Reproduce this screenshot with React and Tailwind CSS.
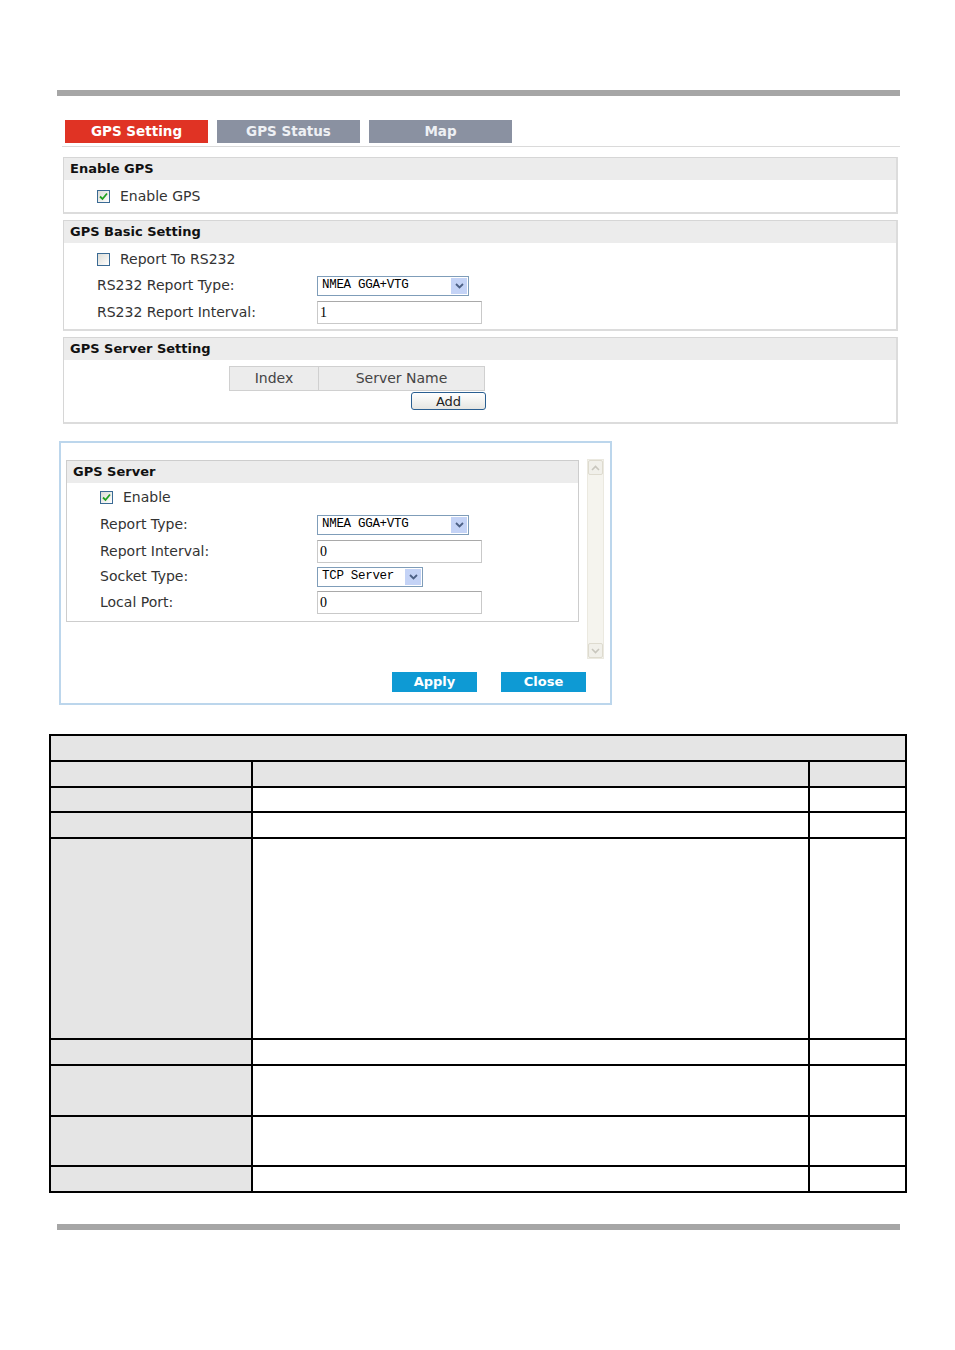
import React from 'react'

const Check = ({ on }) => (
  <span className="inline-flex h-[13px] w-[13px] items-center justify-center border border-[#3a6a94] bg-gradient-to-br from-[#dcdcd6] to-white">
    {on && (
      <svg width="9" height="9" viewBox="0 0 9 9">
        <path d="M1 4.5 L3.5 7 L8 1.5" fill="none" stroke="#21a121" strokeWidth="1.8" />
      </svg>
    )}
  </span>
)

const Select = ({ value, w = 'w-[152px]' }) => (
  <div className={`flex h-[20px] ${w} items-center justify-between border border-[#7f9db9] bg-white`}>
    <span className="pl-[4px] font-['Liberation_Mono',monospace] text-[12.5px] tracking-[-0.3px] text-black">{value}</span>
    <span className="mr-[1px] flex h-[16px] w-[16px] items-center justify-center bg-[#c4d3f6]">
      <svg width="9" height="6" viewBox="0 0 9 6">
        <path d="M1 1 L4.5 4.5 L8 1" fill="none" stroke="#4d6185" strokeWidth="1.8" />
      </svg>
    </span>
  </div>
)

const Input = ({ value }) => (
  <div className="flex h-[23px] w-[165px] items-center border border-[#c9c9c9] border-t-[#a9a9a9] bg-white pl-[2px] font-['Liberation_Serif',serif] text-[14px] text-black">
    {value}
  </div>
)

const Header = ({ children }) => (
  <div className="flex h-[22px] items-center bg-[#ececec] pl-[6px] text-[13px] font-bold text-[#111]">{children}</div>
)

const Row = ({ label, children, h = 'h-[26px]', lw = 'w-[220px]' }) => (
  <div className={`flex ${h} items-center pl-[33px]`}>
    <span className={lw}>{label}</span>
    {children}
  </div>
)

const Box = ({ title, children }) => (
  <div className="border border-[#d6d6d6] border-r-2 border-r-[#dcdcdc] border-b-2 border-b-[#dcdcdc] bg-white">
    <Header>{title}</Header>
    {children}
  </div>
)

function Scrollbar() {
  return (
    <div className="flex h-[200px] w-[17px] flex-col justify-between border border-[#ebe9e0] bg-[#f5f4ee]">
      <span className="flex h-[15px] w-[15px] items-center justify-center rounded-[2px] border border-[#dedbcf] bg-[#f1f0ea]">
        <svg width="9" height="6" viewBox="0 0 9 6"><path d="M1 5 L4.5 1.5 L8 5" fill="none" stroke="#c8c6bd" strokeWidth="1.6" /></svg>
      </span>
      <span className="flex h-[15px] w-[15px] items-center justify-center rounded-[2px] border border-[#dedbcf] bg-[#f1f0ea]">
        <svg width="9" height="6" viewBox="0 0 9 6"><path d="M1 1 L4.5 4.5 L8 1" fill="none" stroke="#c8c6bd" strokeWidth="1.6" /></svg>
      </span>
    </div>
  )
}

const rows = [26, 26, 25, 26, 201, 26, 51, 50, 26]

export default function App() {
  return (
    <div className="min-h-[1350px] w-[955px] bg-white pt-[90px] font-['DejaVu_Sans',sans-serif] text-[14px] text-[#333]">
      <div className="ml-[57px] h-[6px] w-[843px] bg-[#a6a6a6]" />

      <div className="ml-[62px] mt-[24px] w-[838px] border-b border-[#dadada] pb-[3px]">
        <div className="ml-[3px] flex gap-[9px] text-[13.5px] font-bold">
          <div className="flex h-[23px] w-[143px] items-center justify-center bg-[#e03324] text-white">GPS Setting</div>
          <div className="flex h-[23px] w-[143px] items-center justify-center bg-[#8a91a1] text-[#eef0f4]">GPS Status</div>
          <div className="flex h-[23px] w-[143px] items-center justify-center bg-[#8a91a1] text-[#eef0f4]">Map</div>
        </div>
      </div>

      <div className="ml-[63px] mt-[10px] flex w-[835px] flex-col gap-[6px]">
        <Box title="Enable GPS">
          <div className="flex h-[32px] items-center gap-[10px] pl-[33px]">
            <Check on />
            <span>Enable GPS</span>
          </div>
        </Box>

        <Box title="GPS Basic Setting">
          <div className="pb-[3px] pt-[3px]">
            <div className="flex h-[26px] items-center gap-[10px] pl-[33px]">
              <Check />
              <span>Report To RS232</span>
            </div>
            <Row label="RS232 Report Type:" h="h-[27px]"><Select value="NMEA GGA+VTG" /></Row>
            <Row label="RS232 Report Interval:" h="h-[27px]"><Input value="1" /></Row>
          </div>
        </Box>

        <Box title="GPS Server Setting">
          <div className="pb-[12px] pt-[6px]">
            <div className="ml-[165px] flex h-[25px] w-[256px] text-[#444]">
              <div className="flex w-[90px] items-center justify-center border border-[#d0d0d0] bg-[#ececec]">Index</div>
              <div className="flex flex-1 items-center justify-center border border-l-0 border-[#d0d0d0] bg-[#ececec]">Server Name</div>
            </div>
            <div className="ml-[347px] mt-[1px] flex h-[18px] w-[75px] items-end justify-center rounded-[3px] border border-[#2a5f91] bg-gradient-to-b from-white to-[#e6e6e2] text-[13px] leading-[15px] text-[#222]">
              Add
            </div>
          </div>
        </Box>
      </div>

      <div className="ml-[59px] mt-[17px] h-[264px] w-[553px] border-2 border-[#bcd6ec] bg-white">
        <div className="ml-[5px] mt-[17px] flex gap-[8px]">
          <div className="h-[162px] w-[513px] border border-[#cdcdcd]">
            <Header>GPS Server</Header>
            <div className="flex h-[28px] items-center gap-[10px] pl-[33px]">
              <Check on />
              <span>Enable</span>
            </div>
            <Row label="Report Type:" h="h-[27px]" lw="w-[217px]"><Select value="NMEA GGA+VTG" /></Row>
            <Row label="Report Interval:" h="h-[26px]" lw="w-[217px]"><Input value="0" /></Row>
            <Row label="Socket Type:" h="h-[25px]" lw="w-[217px]"><Select value="TCP Server" w="w-[106px]" /></Row>
            <Row label="Local Port:" h="h-[27px]" lw="w-[217px]"><Input value="0" /></Row>
          </div>
          <div className="-mt-[1px]">
            <Scrollbar />
          </div>
        </div>
        <div className="mt-[13px] flex gap-[24px] pl-[331px] text-[13px] font-bold text-white">
          <div className="flex h-[20px] w-[85px] items-center justify-center bg-[#0e9ad4]">Apply</div>
          <div className="flex h-[20px] w-[85px] items-center justify-center bg-[#0e9ad4]">Close</div>
        </div>
      </div>

      <table className="ml-[49px] mt-[29px] w-[856px] table-fixed border-collapse border-2 border-black">
        <colgroup>
          <col className="w-[202px]" />
          <col className="w-[557px]" />
          <col className="w-[97px]" />
        </colgroup>
        <tbody>
          <tr className="h-[26px]">
            <td colSpan={3} className="border-2 border-black bg-[#e5e5e5]" />
          </tr>
          {rows.slice(1).map((h, i) => (
            <tr key={i} style={{ height: h }}>
              <td className="border-2 border-black bg-[#e5e5e5]" />
              <td className={`border-2 border-black ${i === 0 ? 'bg-[#e5e5e5]' : 'bg-white'}`} />
              <td className={`border-2 border-black ${i === 0 ? 'bg-[#e5e5e5]' : 'bg-white'}`} />
            </tr>
          ))}
        </tbody>
      </table>

      <div className="ml-[57px] mt-[31px] h-[6px] w-[843px] bg-[#a6a6a6]" />
    </div>
  )
}
